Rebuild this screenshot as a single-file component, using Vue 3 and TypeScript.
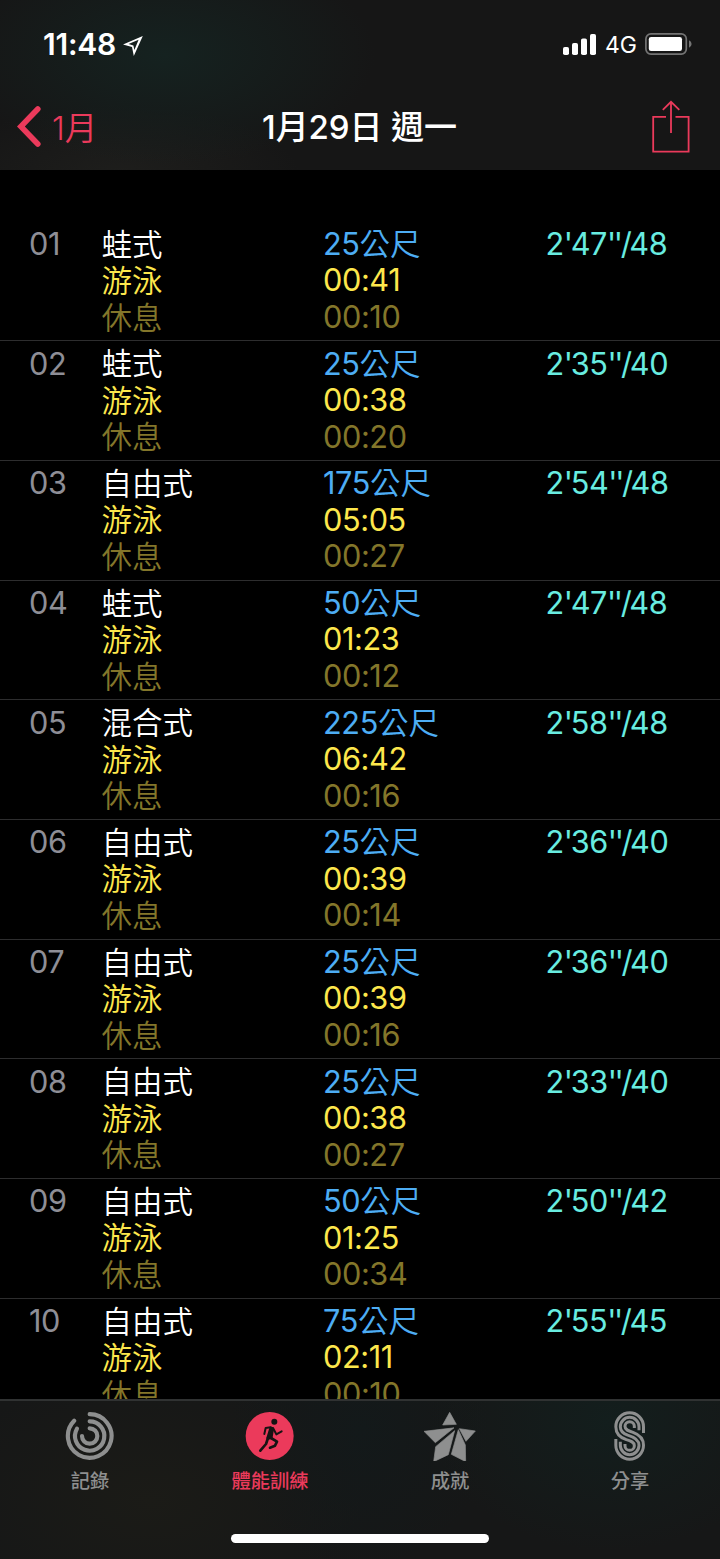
<script setup lang="ts">
interface Lap {
  stroke: string
  metres: number
  swim: string
  rest: string
  pace: [string, string, string]
}

const laps: Lap[] = [
  { stroke: '蛙式', metres: 25, swim: '00:41', rest: '00:10', pace: ['2', '47', '48'] },
  { stroke: '蛙式', metres: 25, swim: '00:38', rest: '00:20', pace: ['2', '35', '40'] },
  { stroke: '自由式', metres: 175, swim: '05:05', rest: '00:27', pace: ['2', '54', '48'] },
  { stroke: '蛙式', metres: 50, swim: '01:23', rest: '00:12', pace: ['2', '47', '48'] },
  { stroke: '混合式', metres: 225, swim: '06:42', rest: '00:16', pace: ['2', '58', '48'] },
  { stroke: '自由式', metres: 25, swim: '00:39', rest: '00:14', pace: ['2', '36', '40'] },
  { stroke: '自由式', metres: 25, swim: '00:39', rest: '00:16', pace: ['2', '36', '40'] },
  { stroke: '自由式', metres: 25, swim: '00:38', rest: '00:27', pace: ['2', '33', '40'] },
  { stroke: '自由式', metres: 50, swim: '01:25', rest: '00:34', pace: ['2', '50', '42'] },
  { stroke: '自由式', metres: 75, swim: '02:11', rest: '00:10', pace: ['2', '55', '45'] },
]

const pad = (n: number): string => String(n).padStart(2, '0')
</script>

<template>
  <div class="screen">
    <header class="top">
      <div class="status">
        <span class="clock">11:48</span>
        <svg class="location" viewBox="0 0 20 20"><path d="M19.800 0 L10.800 20 L9 11 L0 8.500 Z M15.600 3.800 L5.500 8.100 L10.400 9.600 L11.400 14 Z" fill="#fff" fill-rule="evenodd" /></svg>
        <span class="spacer" />
        <svg class="signal" viewBox="0 0 33 21" fill="#fff">
          <rect x="0" y="13" width="6" height="8" rx="1.8" /><rect x="9" y="9" width="6" height="12" rx="1.8" />
          <rect x="18" y="4.5" width="6" height="16.5" rx="1.8" /><rect x="27" y="0" width="6" height="21" rx="1.8" />
        </svg>
        <span class="network">4G</span>
        <svg class="battery" viewBox="0 0 47 22">
          <rect x=".9" y=".9" width="40.4" height="20.2" rx="5" fill="none" stroke="#747474" stroke-width="1.7" />
          <rect x="3.8" y="4" width="33.2" height="14" rx="2.3" fill="#fff" />
          <path d="M44 7.3 Q46.6 8.3 46.6 11 Q46.6 13.7 44 14.7 Z" fill="#747474" />
        </svg>
      </div>
      <nav class="nav">
        <div class="back">
          <svg class="chevron" viewBox="0 0 24 41"><path d="M20.800 3 L3.900 20.500 L20.800 38" fill="none" stroke="#eb3a5b" stroke-width="5.600" stroke-linecap="round" stroke-linejoin="miter" /></svg>
          <span class="back-label">1月</span>
        </div>
        <h1 class="title">1月29日 週一</h1>
        <svg class="share" viewBox="0 0 38 53" fill="none" stroke="#eb3a5b" stroke-width="1.8">
          <path d="M14 16.8 H1.2 V51.600 H36.6 V16.8 H23.5 M19 33 V2" /><path d="M10.8 9.8 L19 1.8 L27.3 9.8" />
        </svg>
      </nav>
    </header>

    <main class="laps">
      <div v-for="(lap, i) in laps" :key="i" class="lap">
        <div class="index">{{ pad(i + 1) }}</div>
        <div class="names">
          <div class="han">{{ lap.stroke }}</div>
          <div class="han swim">游泳</div>
          <div class="han rest">休息</div>
        </div>
        <div class="values">
          <div class="distance">{{ lap.metres }}<span class="unit">公尺</span></div>
          <div class="swim">{{ lap.swim }}</div>
          <div class="rest">{{ lap.rest }}</div>
        </div>
        <div class="pace">{{ lap.pace[0] }}<span class="mark">'</span>{{ lap.pace[1] }}<span class="mark">''/</span>{{ lap.pace[2] }}</div>
      </div>
    </main>

    <footer class="tabs">
      <div class="tab">
        <svg class="icon" viewBox="0 0 160 150" fill="none" stroke="#8e8f8f" stroke-width="12.500" stroke-linecap="round">
          <path d="M80 9.500 A65.500 65.500 0 1 1 33.500 29" /><path d="M80 31 A44 44 0 1 1 41.900 53" /><path d="M80 52 A23 23 0 1 1 57 75" />
        </svg>
        <span>記錄</span>
      </div>
      <div class="tab active">
        <svg class="icon" viewBox="100 93 160 150">
          <circle cx="180" cy="168" r="72" fill="#eb3a5b" />
          <g fill="none" stroke="#161313" stroke-linecap="round" stroke-linejoin="round">
            <circle cx="194" cy="125" r="9" fill="#161313" stroke="none" />
            <path d="M183 142 L168 144 L164 162" stroke-width="6" />
            <path d="M190 144 L200 163 L216 154" stroke-width="6" />
            <path d="M184 145 L188 147 L184 172 L175 174 Z" fill="#161313" stroke-width="10" />
            <path d="M175 174 L169 192 L152 212" stroke-width="8" />
            <path d="M184 174 L202 185 L196 197 L181 203" stroke-width="8" />
          </g>
        </svg>
        <span>體能訓練</span>
      </div>
      <div class="tab">
        <svg class="icon" viewBox="100 93 160 150" fill="#8e8f8f" stroke="#8e8f8f" stroke-width="2" stroke-linejoin="round">
          <path d="M180 97 L200 133 L159 135 Z" /><path d="M103 154 L193 143.500 L137 188 Z" />
          <path d="M209 146 L257 153 L229 184 Z" /><path d="M195 152 L138 200 L132 245 L176 224 Z" />
          <path d="M206 149 L185 223 L228 245 L227 195 Z" />
        </svg>
        <span>成就</span>
      </div>
      <div class="tab">
        <svg class="icon" viewBox="100 93 160 150" fill="none" stroke="#8e8f8f" stroke-width="9">
          <path d="M221.500 159 V140 A41.500 41.500 0 0 0 138.500 140 C138.500 160 150 172 170 179 C184 183 194 186 194 197 A14 14 0 0 1 166 197 V192" />
          <path d="M208 151 V140 A28 28 0 0 0 152 140 C152 153 160 160 174 165.500 C196 172 208 181 208 196 A28 28 0 0 1 152 196 V185" />
          <path d="M194 144 V139 A14 14 0 0 0 166 139 C166 150 176 153 190 157 C210 164 221.500 176 221.500 196 A41.500 41.500 0 0 1 138.500 196 V177" />
        </svg>
        <span>分享</span>
      </div>
      <div class="home" />
    </footer>
  </div>
</template>

<style>
body {
  margin: 0;
  background: #000;
}
</style>

<style scoped>
.screen {
  width: 720px;
  height: 1559px;
  display: flex;
  flex-direction: column;
  overflow: hidden;
  background: #000;
  color: #fff;
  font-family: Inter, "Noto Sans CJK TC", sans-serif;
}
.top {
  flex: none;
  height: 170px;
  background:
    radial-gradient(ellipse 210px 110px at 165px 55px, #152220 0%, rgba(21, 34, 32, 0) 100%),
    radial-gradient(ellipse 180px 70px at 120px 175px, #1e1e1c 0%, rgba(30, 30, 28, 0) 100%),
    #161616;
}
.status {
  display: flex;
  align-items: center;
  height: 88px;
  box-sizing: border-box;
  padding: 0 28px 0 43px;
}
.clock {
  width: 80px;
  font-size: 30px;
  font-weight: 600;
  letter-spacing: -0.2px;
}
.location {
  width: 20px;
  height: 20px;
  margin-top: 3px;
}
.spacer {
  flex: 1;
}
.signal {
  width: 33px;
  height: 21px;
}
.network {
  margin: 2px 0 0 9px;
  width: 40px;
  font-size: 23px;
}
.battery {
  width: 47px;
  height: 22px;
}
.nav {
  display: grid;
  grid-template-columns: 1fr auto 1fr;
  align-items: center;
  height: 77px;
  padding: 0 30px 0 17px;
}
.back {
  display: flex;
  align-items: center;
  color: #eb3a5b;
}
.chevron {
  width: 24px;
  height: 41px;
}
.back-label {
  margin: -3px 0 0 11px;
  font-size: 32.500px;
  font-weight: 350;
}
.title {
  margin: -4px 0 0 12px;
  font-size: 33px;
  font-weight: 540;
  letter-spacing: -0.100px;
  white-space: nowrap;
}
.share {
  justify-self: end;
  width: 38px;
  height: 53px;
}
.laps {
  flex: 1;
  min-height: 0;
  overflow: hidden;
  padding-top: 51.600px;
}
.lap {
  display: grid;
  grid-template-columns: 72.500px 221.500px 222.500px 1fr;
  height: 119.680px;
  box-sizing: border-box;
  padding: 4.300px 0 0 29px;
  border-bottom: 1px solid #2d2d2e;
  font-size: 30.700px;
  font-weight: 380;
  letter-spacing: -0.400px;
  line-height: 36.500px;
  white-space: nowrap;
}
.lap div {
  height: 36.500px;
}
.lap .names,
.lap .values {
  height: auto;
}
.names {
  margin-top: -1.300px;
}
.han,
.unit {
  font-family: "Noto Sans CJK TC", sans-serif;
  font-size: 30.500px;
  font-weight: 350;
  letter-spacing: 0;
}
.unit {
  line-height: 0;
}
.mark {
  letter-spacing: -2.400px;
}
.index {
  color: #8e8e96;
}
.distance {
  color: #4dadf4;
}
.swim {
  color: #fde74c;
}
.rest {
  color: #83762a;
}
.pace {
  color: #68ece0;
}
.tabs {
  flex: none;
  display: flex;
  flex-wrap: wrap;
  align-content: flex-start;
  height: 160px;
  box-sizing: border-box;
  border-top: 2px solid #303232;
  background:
    radial-gradient(ellipse 180px 130px at 610px 20px, #131e1d 0%, rgba(19, 30, 29, 0) 100%),
    radial-gradient(ellipse 130px 140px at 360px 30px, #13191a 0%, rgba(19, 25, 26, 0) 100%),
    radial-gradient(ellipse 210px 130px at 150px 100px, #1b1b17 0%, rgba(27, 27, 23, 0) 100%),
    #161717;
}
.tab {
  width: 25%;
  height: 133px;
  box-sizing: border-box;
  padding-top: 10px;
  display: flex;
  flex-direction: column;
  align-items: center;
  color: #8e8f8f;
  font-size: 19.300px;
  line-height: 28px;
  font-weight: 500;
}
.active {
  color: #eb3a5b;
}
.icon {
  width: 53.330px;
  height: 50px;
  margin-bottom: 6px;
}
.home {
  width: 258px;
  height: 9px;
  margin: 0 auto;
  border-radius: 5px;
  background: #fff;
}
</style>
